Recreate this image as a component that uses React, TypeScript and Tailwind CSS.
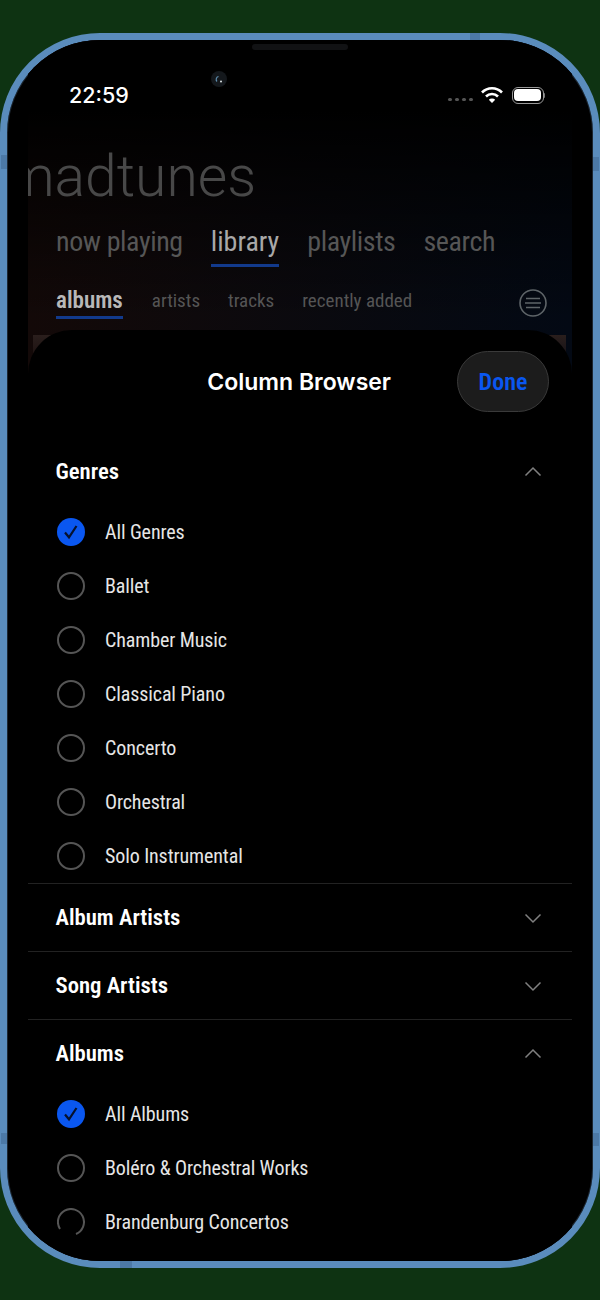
const font = "font-['Roboto',sans-serif] [font-stretch:75%]";

function Check() {
  return (
    <svg width="28" height="28" viewBox="0 0 28 28" className="shrink-0">
      <circle cx="14" cy="14" r="14" fill="#0a57f0" />
      <path d="M8 14.500l4 4.800L19.500 8" fill="none" stroke="#06122e" strokeWidth="2.200" />
    </svg>
  );
}

function Radio({ clipped }: { clipped?: boolean }) {
  return (
    <svg width="28" height="28" viewBox="0 0 28 28" className="shrink-0">
      {clipped ? (
        <path d="M3 21A13 13 0 1 1 19 26" fill="none" stroke="#555" strokeWidth="2" />
      ) : (
        <circle cx="14" cy="14" r="13" fill="none" stroke="#555" strokeWidth="2" />
      )}
    </svg>
  );
}

function Row({ label, checked, clipped }: { label: string; checked?: boolean; clipped?: boolean }) {
  return (
    <div className="flex h-[54px] items-center gap-[20px] pl-[29px]">
      {checked ? <Check /> : <Radio clipped={clipped} />}
      <span className={`${font} text-[20px] tracking-[-0.1px] text-[#e6e6e6]`}>{label}</span>
    </div>
  );
}

function SectionHead({ title, open }: { title: string; open?: boolean }) {
  return (
    <div className="flex h-[67px] items-center justify-between pl-[27.500px] pr-[29px]">
      <span className={`${font} mt-[2px] text-[22.700px] font-semibold text-white`}>{title}</span>
      <svg width="20" height="12" viewBox="0 0 20 12" fill="none" stroke="#808080" strokeWidth="1.500" className="mt-[1px]">
        <path d={open ? "M2.500 9.500l7.500-7.500 7.500 7.500" : "M2.500 2.500l7.500 7.500 7.500-7.500"} />
      </svg>
    </div>
  );
}

export default function App() {
  return (
    <div className="h-[1300px] w-[600px] overflow-hidden bg-[#0e3312] pt-[33px]">
      <div className="relative">
        <div className="relative h-[1235px] w-[600px] overflow-hidden rounded-[100px] border-[7px] border-[#5a8cbc] bg-black pl-[21px] pr-[21px] shadow-[inset_0_0_0_1px_#1c2630]">
          <div className="flex h-full flex-col overflow-hidden bg-gradient-to-r from-[#130908] to-[#030914]">
            <div className="bg-gradient-to-b from-black from-[25%] to-transparent">
              <div className="flex items-center justify-between pl-[41px] pr-[27px] pt-[43px]">
                <span className="font-['Inter',sans-serif] text-[21.500px] font-medium leading-[24px] text-white">22:59</span>
                <div className="flex items-center gap-[7px]">
                  <div className="mt-[9px] flex gap-[3px]">
                    <span className="h-[3px] w-[4px] rounded-full bg-[#555]" />
                    <span className="h-[3px] w-[4px] rounded-full bg-[#555]" />
                    <span className="h-[3px] w-[4px] rounded-full bg-[#555]" />
                    <span className="h-[3px] w-[4px] rounded-full bg-[#555]" />
                  </div>
                  <svg width="24" height="18" viewBox="0 0 24 18">
                    <path d="M2 6.500a14 14 0 0 1 20 0" fill="none" stroke="#fff" strokeWidth="2.600" />
                    <path d="M6 10.500a8.500 8.500 0 0 1 12 0" fill="none" stroke="#fff" strokeWidth="2.600" />
                    <path d="M12 17l-3.200-3.200a4.500 4.500 0 0 1 6.400 0z" fill="#fff" />
                  </svg>
                  <div className="flex items-center">
                    <div className="ml-[1px] h-[17px] w-[32px] rounded-[6px] border border-[#999] p-[1.500px]">
                      <div className="h-full w-full rounded-[4px] bg-white" />
                    </div>
                    <div className="h-[5px] w-[1.500px] rounded-r bg-[#777]" />
                  </div>
                </div>
              </div>

              <div className="ml-[-24px] mt-[37px] font-['Roboto',sans-serif] text-[57px] font-light leading-[66px] text-[#484848]">madtunes</div>

              <div className={`${font} mt-[12px] flex gap-[28px] pl-[28px] text-[28px] leading-[40px] tracking-[-0.4px] text-[#565656]`}>
                <span>now playing</span>
                <span className="border-b-[3px] border-[#123a8c] pb-[2px] tracking-normal text-[#a8a8a8]">library</span>
                <span>playlists</span>
                <span>search</span>
              </div>

              <div className={`${font} mt-[20px] flex items-start pl-[28px] pr-[25px] text-[19px] leading-[28px] text-[#555]`}>
                <span className="border-b-[3px] border-[#123a8c] pb-[1px] text-[23px] font-semibold text-[#b8b8b8]">albums</span>
                <span className="ml-[29px]">artists</span>
                <span className="ml-[28px]">tracks</span>
                <span className="ml-[28px]">recently added</span>
                <svg width="28" height="28" viewBox="0 0 28 28" className="ml-auto mt-[2px]">
                  <circle cx="14" cy="14" r="13" fill="none" stroke="#5e6468" strokeWidth="1.600" />
                  <path d="M7 9.500h14M6 14h16M7 18.500h14" stroke="#5e6468" strokeWidth="1.600" />
                </svg>
              </div>
            </div>

            <div className="relative mt-[11px] min-h-0 flex-1">
              <div className="absolute left-[5px] right-[6px] top-[5px] h-[40px] bg-gradient-to-b from-[#2a1e1c] to-transparent" />
              <div className="relative h-full overflow-hidden rounded-t-[44px] bg-black">
                <div className="flex items-start justify-end pr-[23px] pt-[21px]">
                  <span className="mr-[66px] mt-[15px] font-['Inter',sans-serif] text-[23px] font-semibold leading-[32px] text-white">Column Browser</span>
                  <div className={`${font} flex h-[61px] w-[92px] items-center justify-center rounded-full border border-[#3a3a3a] bg-[#1c1c1c] text-[24px] font-semibold text-[#0a57f0]`}>
                    Done
                  </div>
                </div>

                <div className="mt-[26px]">
                  <SectionHead title="Genres" open />
                  <Row label="All Genres" checked />
                  <Row label="Ballet" />
                  <Row label="Chamber Music" />
                  <Row label="Classical Piano" />
                  <Row label="Concerto" />
                  <Row label="Orchestral" />
                  <Row label="Solo Instrumental" />
                </div>
                <div className="border-t border-[#222]">
                  <SectionHead title="Album Artists" />
                </div>
                <div className="border-t border-[#222]">
                  <SectionHead title="Song Artists" />
                </div>
                <div className="border-t border-[#222]">
                  <SectionHead title="Albums" open />
                  <Row label="All Albums" checked />
                  <Row label="Boléro & Orchestral Works" />
                  <Row label="Brandenburg Concertos" clipped />
                </div>
              </div>
            </div>
          </div>

          <div className="absolute left-[245px] top-[4px] h-[6px] w-[96px] rounded-full bg-[#111214]" />
          <svg width="16" height="16" viewBox="0 0 16 16" className="absolute left-[204px] top-[31px]">
            <circle cx="8" cy="8" r="8" fill="#14181c" />
            <path d="M6 10.500a3 3 0 0 1 1.500-5" fill="none" stroke="#5f8fb0" strokeWidth="1.200" />
            <circle cx="10" cy="10.500" r="1" fill="#dfe6ea" />
          </svg>
        </div>

        {/* antenna bands on the frame */}
        <div className="absolute left-[470px] top-0 h-[7px] w-[10px] bg-[#4c79a6]" />
        <div className="absolute left-[1px] top-[122px] h-[14px] w-[6px] bg-[#4c79a6]" />
        <div className="absolute right-[1px] top-[124px] h-[14px] w-[6px] bg-[#4c79a6]" />
        <div className="absolute left-[1px] top-[1100px] h-[11px] w-[6px] bg-[#4c79a6]" />
        <div className="absolute right-[1px] top-[1100px] h-[13px] w-[6px] bg-[#4c79a6]" />
        <div className="absolute bottom-0 left-[120px] h-[7px] w-[12px] bg-[#4c79a6]" />
      </div>
    </div>
  );
}
